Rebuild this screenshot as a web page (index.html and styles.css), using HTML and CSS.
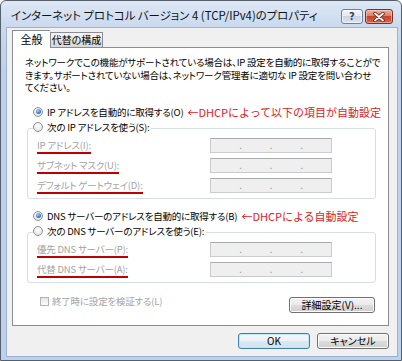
FILE: index.html
```html
<!DOCTYPE html>
<html lang="ja">
<head>
  <meta charset="UTF-8" />
  <title>インターネット プロトコル バージョン 4 (TCP/IPv4)のプロパティ</title>
  <link rel="stylesheet" href="styles.css">
</head>
<body>
  <div class="window">
    <div class="titlebar">
      <span class="title">インターネット プロトコル バージョン 4 (TCP/IPv4)のプロパティ</span>
      <div class="caption-btns">
        <button class="cap help">?</button>
        <button class="cap close">
          <svg width="12" height="10" viewBox="0 0 12 10">
            <path d="M2 1.5 L10 8.5 M10 1.5 L2 8.5" stroke="#5a1a10" stroke-width="3.4" stroke-linecap="round" />
            <path d="M2 1.5 L10 8.5 M10 1.5 L2 8.5" stroke="#ffffff" stroke-width="1.8" stroke-linecap="round" />
          </svg>
        </button>
      </div>
    </div>

    <div class="client">
      <div class="tabs">
        <div class="tab active">全般</div>
        <div class="tab">代替の構成</div>
      </div>

      <div class="panel">
        <p class="desc">ネットワークでこの機能がサポートされている場合は、IP 設定を自動的に取得することがで<br>きます。サポートされていない場合は、ネットワーク管理者に適切な IP 設定を問い合わせ<br>てください。</p>

        <div class="radio-row first">
          <span class="radio on"></span>IP アドレスを自動的に取得する(O)
          <span class="note">←DHCPによって以下の項目が自動設定</span>
        </div>

        <fieldset class="group">
          <legend><span class="radio"></span>次の IP アドレスを使う(S):</legend>
          <div class="rows">
            <div class="field-row">
              <span class="field-label"><span>IP アドレス(I):</span></span>
              <div class="ip-box"><span>.</span><span>.</span><span>.</span></div>
            </div>
            <div class="field-row">
              <span class="field-label"><span>サブネット マスク(U):</span></span>
              <div class="ip-box"><span>.</span><span>.</span><span>.</span></div>
            </div>
            <div class="field-row">
              <span class="field-label"><span>デフォルト ゲートウェイ(D):</span></span>
              <div class="ip-box"><span>.</span><span>.</span><span>.</span></div>
            </div>
          </div>
        </fieldset>

        <div class="radio-row second">
          <span class="radio on"></span>DNS サーバーのアドレスを自動的に取得する(B)
          <span class="note">←DHCPによる自動設定</span>
        </div>

        <fieldset class="group">
          <legend><span class="radio"></span>次の DNS サーバーのアドレスを使う(E):</legend>
          <div class="rows">
            <div class="field-row">
              <span class="field-label"><span>優先 DNS サーバー(P):</span></span>
              <div class="ip-box"><span>.</span><span>.</span><span>.</span></div>
            </div>
            <div class="field-row">
              <span class="field-label"><span>代替 DNS サーバー(A):</span></span>
              <div class="ip-box"><span>.</span><span>.</span><span>.</span></div>
            </div>
          </div>
        </fieldset>

        <div class="check-row">
          <div class="check"><span class="box"></span>終了時に設定を検証する(L)</div>
          <button class="btn advanced">詳細設定(V)...</button>
        </div>
      </div>

      <div class="footer">
        <button class="btn default">OK</button>
        <button class="btn">キャンセル</button>
      </div>
    </div>
  </div>
</body>
</html>
```

FILE: styles.css
```css
* {
  box-sizing: border-box;
}

body {
  margin: 0;
  font-family: "Noto Sans CJK JP", "Noto Sans", sans-serif;
  font-size: 9.5px;
  letter-spacing: -0.2px;
  font-feature-settings: "palt";
  color: #000;
  background: #fff;
}

/* ウィンドウ枠 */
.window {
  width: 402px;
  height: 361px;
  border: 1px solid #56606c;
  border-radius: 6px 6px 0 0;
  background: linear-gradient(#dde8f4 0, #cad9ee 26px, #bcd1eb 70px, #bcd1eb 100%);
  display: flex;
  flex-direction: column;
}

.titlebar {
  height: 27px;
  display: flex;
  align-items: flex-start;
  padding: 0 8px 0 10px;
  flex-shrink: 0;
}

.title {
  font-size: 11.4px;
  letter-spacing: 0;
  line-height: 14px;
  margin-top: 7px;
  color: #111;
  white-space: nowrap;
}

.caption-btns {
  margin-left: auto;
  margin-top: 8px;
  display: flex;
  gap: 2px;
}

.cap {
  height: 15px;
  padding: 0;
  border-radius: 3px;
  display: flex;
  align-items: center;
  justify-content: center;
}

.help {
  width: 22px;
  border: 1px solid #6f7f96;
  background: linear-gradient(#f4f7fb, #e1e8f1 50%, #cbd6e4 50%, #dbe4ef);
  box-shadow: inset 0 0 0 1px rgba(255 255 255 / 0.6);
  color: #34465f;
  font-family: "DejaVu Sans", sans-serif;
  font-size: 10px;
  font-weight: bold;
  line-height: 13px;
}

.close {
  width: 28px;
  border: 1px solid #7a3024;
  background: linear-gradient(#eab0a2, #d97c64 50%, #c4452c 50%, #d5694e);
  box-shadow: inset 0 0 0 1px rgba(255 220 210 / 0.5);
}

/* クライアント領域 */
.client {
  flex: 1;
  margin: 0 4px 4px 6px;
  padding: 2px 8px 0 5px;
  background: #f0f0f0;
  box-shadow: 0 0 0 1px #9db2cc;
}

.tabs {
  display: flex;
  align-items: flex-end;
  height: 18px;
  margin-bottom: -1px;
  position: relative;
  z-index: 1;
}

.tab {
  width: 53px;
  height: 15px;
  margin-bottom: 1px;
  border: 1px solid #898c95;
  border-bottom: none;
  text-align: center;
  font-size: 10px;
  letter-spacing: 0;
  line-height: 14px;
  background: linear-gradient(#f3f3f3, #ececec 50%, #e0e0e0 50%, #d9d9d9);
}

.tab.active {
  width: 38px;
  height: 18px;
  margin-bottom: 0;
  border-right: none;
  background: #fff;
  line-height: 16px;
  font-size: 11px;
}

.panel {
  width: 377px;
  height: 279px;
  background: #fff;
  border: 1px solid #898c95;
  padding: 8px 12px 0 12px;
}

.desc {
  margin: 0;
  line-height: 12.5px;
  white-space: nowrap;
}

.radio-row {
  display: flex;
  align-items: center;
  height: 14px;
  margin-left: 8px;
  white-space: nowrap;
}

.radio-row.first {
  margin-top: 11px;
}

.radio-row.second {
  margin-top: 10px;
}

.radio {
  width: 10px;
  height: 10px;
  border-radius: 50%;
  border: 1px solid #8f9194;
  background: radial-gradient(circle at 50% 40%, #ffffff, #dcdcdc);
  margin-right: 4px;
  flex-shrink: 0;
  position: relative;
}

.radio.on::after {
  content: "";
  position: absolute;
  left: 1.5px;
  top: 1.5px;
  width: 5px;
  height: 5px;
  border-radius: 50%;
  background: radial-gradient(circle at 40% 35%, #a8dcff, #2f79d0 60%, #164a90);
}

.note {
  color: #e0201c;
  font-size: 11px;
  letter-spacing: 0;
  margin-left: 4px;
  font-feature-settings: normal;
}

/* グループボックス */
.group {
  margin: 2px 0 0 2px;
  padding: 1px 0 5px 9px;
  border: 1px solid #d5dfe5;
  border-radius: 3px;
  min-width: 0;
}

.group legend {
  display: flex;
  align-items: center;
  height: 16px;
  padding: 0 2px 4px 0;
  margin-left: -4px;
  white-space: nowrap;
}

.rows {
  display: flex;
  flex-direction: column;
  gap: 5px;
}

.field-row {
  display: grid;
  grid-template-columns: 173px 122px;
  align-items: center;
  height: 15px;
}

.field-label span {
  display: inline-block;
  line-height: 13px;
  color: #a3a3a3;
  border-bottom: 2px solid #c00000;
  white-space: nowrap;
}

.ip-box {
  height: 15px;
  border: 1px solid #c9cbce;
  border-top-color: #a8aaae;
  background: #efefef;
  display: flex;
  justify-content: space-evenly;
  line-height: 13px;
  color: #8a8a8a;
}

/* 下部 */
.check-row {
  display: flex;
  justify-content: space-between;
  align-items: flex-start;
  margin: 14px 1px 0 15px;
}

.check {
  display: flex;
  align-items: center;
  height: 9px;
  color: #a3a3a3;
  white-space: nowrap;
}

.check .box {
  width: 9px;
  height: 9px;
  border: 1px solid #b3b3b3;
  background: linear-gradient(#e6e6e6, #fbfbfb);
  margin-right: 3px;
}

.btn {
  height: 16px;
  width: 72px;
  padding: 0;
  border: 1px solid #707070;
  border-radius: 3px;
  background: linear-gradient(#f2f2f2, #ebebeb 50%, #dddddd 50%, #cfcfcf);
  box-shadow: inset 0 0 0 1px #fcfcfc;
  font-family: inherit;
  font-size: 10px;
  font-feature-settings: "palt";
  line-height: 14px;
  color: #000;
}

.btn.advanced {
  width: 86px;
}

.btn.default {
  border-color: #3c7fb1;
  box-shadow: inset 0 0 0 1px #bfe6fa;
  background: linear-gradient(#f4f8fb, #eaf1f7 50%, #dce8f2 50%, #d2e2ee);
}

.footer {
  display: flex;
  justify-content: flex-end;
  gap: 7px;
  margin-top: 7px;
}
```
